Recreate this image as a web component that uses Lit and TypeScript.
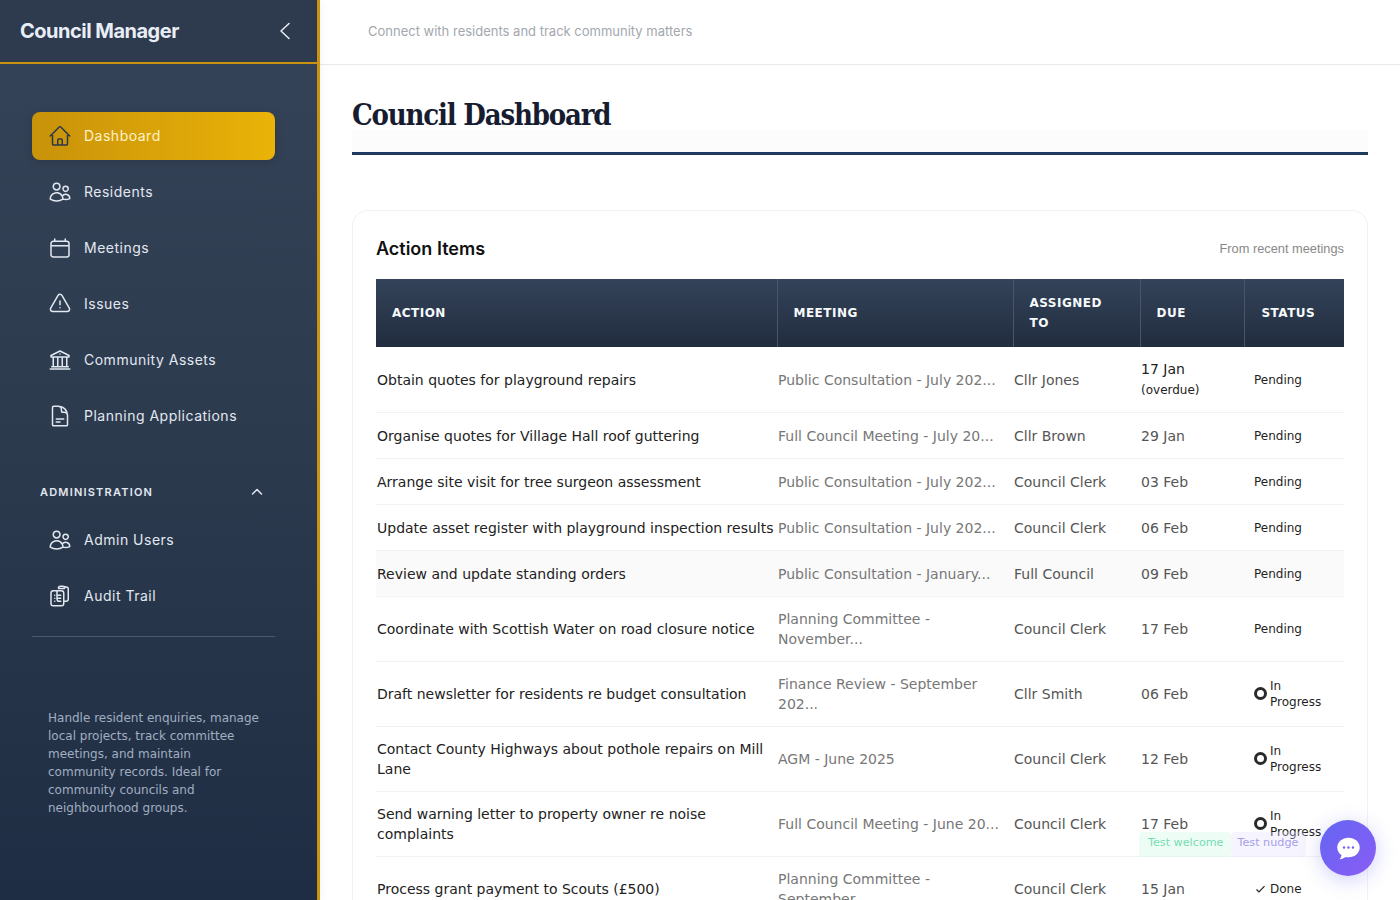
import { LitElement, html, css, svg } from "lit";
import { customElement } from "lit/decorators.js";

const icons: Record<string, any> = {
  home: svg`<path d="M2.25 12l8.95-8.95a1.13 1.13 0 0 1 1.6 0L21.750 12M4.500 9.750V19.900c0 .6.5 1.100 1.100 1.100H9.750v-4.900c0-.6.5-1.100 1.100-1.100h2.300c.6 0 1.100.5 1.100 1.100V21h4.150c.6 0 1.100-.5 1.100-1.100V9.750M8.250 21h8.250"/>`,
  users: svg`<path d="M15 19.130a9.380 9.380 0 0 0 2.630.37 9.340 9.340 0 0 0 4.120-.95 4.130 4.130 0 0 0-7.530-2.490M15 19.130v-.01c0-1.110-.29-2.160-.78-3.070M15 19.130v.1A12.320 12.320 0 0 1 8.620 21c-2.330 0-4.510-.64-6.370-1.770v-.11a6.380 6.380 0 0 1 11.960-3.070M12 6.380a3.380 3.380 0 1 1-6.750 0 3.380 3.380 0 0 1 6.750 0zM20.250 8.630a2.630 2.630 0 1 1-5.250 0 2.630 2.630 0 0 1 5.250 0z"/>`,
  calendar: svg`<path d="M6.750 3v2.250M17.250 3v2.250M3 18.750V7.500a2.250 2.250 0 0 1 2.250-2.250h13.500A2.250 2.250 0 0 1 21 7.500v11.250M3 18.750A2.250 2.250 0 0 0 5.250 21h13.500A2.250 2.250 0 0 0 21 18.750M3 9.750h18"/>`,
  warning: svg`<path d="M12 9v3.750M2.700 16.130c-.87 1.500.22 3.370 1.950 3.370h14.700c1.730 0 2.820-1.870 1.950-3.370L13.950 3.380c-.87-1.500-3.030-1.500-3.900 0L2.700 16.130zM12 15.750h.01v.01H12v-.01z"/>`,
  bank: svg`<path d="M12 3l9 4.500V9H3V7.500L12 3zM5.250 9v9.750M9.750 9v9.750M14.250 9v9.750M18.750 9v9.750M3.750 18.750h16.500M2.250 21h19.500M12 6h.01"/>`,
  doc: svg`<path d="M19.500 14.250v-2.630a3.380 3.380 0 0 0-3.380-3.370h-1.500A1.130 1.130 0 0 1 13.500 7.130v-1.500a3.380 3.380 0 0 0-3.380-3.380H8.250M8.250 15h7.500M8.250 18H12M10.500 2.250H5.630c-.62 0-1.130.5-1.130 1.130v17.250c0 .62.5 1.120 1.130 1.120h12.750c.62 0 1.120-.5 1.120-1.120V11.250a9 9 0 0 0-9-9z"/>`,
  clipboard: svg`<path d="M9 6.750V15a2.250 2.250 0 0 0 2.250 2.250M15.750 17.250h2.250a2.250 2.250 0 0 0 2.250-2.250V5.100c0-1.130-.84-2.090-1.960-2.180a48 48 0 0 0-1.120-.08M15 2.250H12a1.500 1.500 0 0 0-1.420 1.030M15 2.250a1.500 1.500 0 0 1 1.500 1.500v.75h-6v-.75c0-.16.03-.32.08-.47M6 6.750H5.250C4.010 6.750 3 7.760 3 9v10.500c0 1.240 1.010 2.250 2.250 2.250h8.250c1.240 0 2.250-1.010 2.250-2.250V9c0-1.240-1.010-2.250-2.250-2.250H6zM6.750 11.250h.01M6.750 14.250h.01M6.750 17.250h.01M9.750 11.250H12.750M9.750 14.250H12.750M9.750 17.250H12.750"/>`,
};

const icon = (name: string) => html`<svg class="ico" viewBox="0 0 24 24" fill="none" stroke="currentColor" stroke-width="1.5" stroke-linecap="round" stroke-linejoin="round">${icons[name]}</svg>`;

const nav = [
  { label: "Dashboard", icon: "home", active: true },
  { label: "Residents", icon: "users" },
  { label: "Meetings", icon: "calendar" },
  { label: "Issues", icon: "warning" },
  { label: "Community Assets", icon: "bank" },
  { label: "Planning Applications", icon: "doc" },
];
const adminNav = [
  { label: "Admin Users", icon: "users" },
  { label: "Audit Trail", icon: "clipboard" },
];

const rows = [
  { action: "Obtain quotes for playground repairs", meeting: "Public Consultation - July 202...", who: "Cllr Jones", due: "17 Jan", overdue: true, status: "Pending", tall: true },
  { action: "Organise quotes for Village Hall roof guttering", meeting: "Full Council Meeting - July 20...", who: "Cllr Brown", due: "29 Jan", status: "Pending" },
  { action: "Arrange site visit for tree surgeon assessment", meeting: "Public Consultation - July 202...", who: "Council Clerk", due: "03 Feb", status: "Pending" },
  { action: "Update asset register with playground inspection results", meeting: "Public Consultation - July 202...", who: "Council Clerk", due: "06 Feb", status: "Pending" },
  { action: "Review and update standing orders", meeting: "Public Consultation - January...", who: "Full Council", due: "09 Feb", status: "Pending", hover: true },
  { action: "Coordinate with Scottish Water on road closure notice", meeting: "Planning Committee - November...", who: "Council Clerk", due: "17 Feb", status: "Pending", tall: true },
  { action: "Draft newsletter for residents re budget consultation", meeting: "Finance Review - September 202...", who: "Cllr Smith", due: "06 Feb", status: "In Progress", tall: true },
  { action: "Contact County Highways about pothole repairs on Mill Lane", meeting: "AGM - June 2025", who: "Council Clerk", due: "12 Feb", status: "In Progress", tall: true },
  { action: "Send warning letter to property owner re noise complaints", meeting: "Full Council Meeting - June 20...", who: "Council Clerk", due: "17 Feb", status: "In Progress", tall: true },
  { action: "Process grant payment to Scouts (£500)", meeting: "Planning Committee - September...", who: "Council Clerk", due: "15 Jan", status: "Done", tall: true },
];

@customElement("app-root")
export class AppRoot extends LitElement {
  static styles = css`
    :host {
      display: flex;
      height: 900px;
      overflow: hidden;
      background: #fff;
      font-family: "DejaVu Sans", sans-serif;
    }
    .sidebar {
      position: relative;
      z-index: 1;
      width: 320px;
      flex: none;
      box-sizing: border-box;
      border-right: 3px solid #ca9410;
      background: linear-gradient(180deg, #364459 0%, #2c3a4e 50%, #1f2d44 100%);
      box-shadow: 0 0 10px rgba(0, 0, 0, 0.06);
      font-family: Inter, sans-serif;
      display: flex;
      flex-direction: column;
    }
    .brand {
      height: 64px;
      box-sizing: border-box;
      flex: none;
      display: flex;
      align-items: center;
      justify-content: space-between;
      padding: 0 26px 0 20px;
      background: #2e3a4e;
      border-bottom: 2px solid #ca9410;
      color: #e8eef6;
      font-size: 20px;
      font-weight: 700;
      letter-spacing: -0.5px;
    }
    .brand svg {
      width: 12px;
      height: 20px;
      display: block;
    }
    .menu {
      padding: 48px 42px 0 32px;
    }
    .item {
      height: 48px;
      margin-bottom: 8px;
      padding: 0 16px;
      display: flex;
      align-items: center;
      gap: 12px;
      border-radius: 8px;
      color: #e2e8f0;
      font-size: 14px;
      font-weight: 400;
      letter-spacing: 0.5px;
    }
    .item span {
      padding-bottom: 2px;
    }
    .item.active {
      background: linear-gradient(90deg, #c8920a 0%, #eab308 100%);
      color: #fef3c7;
      box-shadow: 0 2px 8px rgba(0, 0, 0, 0.15);
    }
    .item.active .ico {
      color: #2d3748;
    }
    .ico {
      width: 24px;
      height: 24px;
      flex: none;
      display: block;
    }
    .admin-head {
      margin-top: 32px;
      padding: 0 8px;
      height: 40px;
      display: flex;
      align-items: center;
      justify-content: space-between;
      color: #e2e8f0;
      font-size: 11px;
      font-weight: 600;
      letter-spacing: 1.2px;
    }
    .admin-head svg {
      width: 12px;
      height: 12px;
      margin-right: 4px;
    }
    .admin {
      margin-top: 4px;
    }
    .divider {
      height: 1px;
      background: #4a5a70;
      margin-top: 16px;
    }
    .about {
      margin: 72px 0 0;
      padding: 0 16px;
      color: #a0aec0;
      font-family: "DejaVu Sans", sans-serif;
      font-size: 12px;
      line-height: 18px;
    }
    .main {
      flex: 1;
      min-width: 0;
      overflow: hidden;
    }
    .topbar {
      height: 65px;
      box-sizing: border-box;
      border-bottom: 1px solid #e8eaed;
      display: flex;
      align-items: center;
      padding: 0 0 2px 48px;
      color: #a3a7ae;
      font-family: Inter, sans-serif;
      font-size: 13px;
    }
    .content {
      padding: 32px 32px 0;
    }
    .title {
      margin: 0;
      box-sizing: border-box;
      height: 58px;
      border-bottom: 3px solid #1e3a5f;
      background: linear-gradient(180deg, #fff 33px, #fcfcfc 33px);
      color: #171c30;
      font-family: "DejaVu Serif Condensed", "DejaVu Serif", serif;
      font-stretch: condensed;
      font-size: 29px;
      font-weight: 700;
      line-height: 36px;
      letter-spacing: -1.2px;
    }
    .card {
      margin-top: 55px;
      box-shadow: inset 0 0 0 1px #f1f2f4;
      border-radius: 16px;
      padding: 24px 24px 0;
    }
    .card-head {
      display: flex;
      justify-content: space-between;
      align-items: center;
      box-sizing: border-box;
      height: 29px;
      padding-bottom: 1px;
      margin-bottom: 16px;
    }
    .card-head h2 {
      margin: 0;
      color: #111;
      font-family: Inter, sans-serif;
      font-size: 18px;
      font-weight: 600;
    }
    .card-head span {
      color: #888;
      font-family: "Liberation Sans", sans-serif;
      font-size: 12.8px;
    }
    table {
      width: 968px;
      table-layout: fixed;
      border-collapse: collapse;
    }
    th {
      height: 68px;
      box-sizing: border-box;
      padding: 0 16px;
      background: linear-gradient(180deg, #34435a 0%, #212c3e 100%);
      border-left: 1px solid #4a5568;
      color: #f7fafc;
      font-size: 12px;
      font-weight: 700;
      letter-spacing: 0.48px;
      line-height: 20px;
      text-align: left;
    }
    th:first-child {
      border-left: 0;
    }
    th:last-child {
      padding-left: 17px;
    }
    td {
      padding: 9px 1px 8px;
      border-bottom: 1px solid #f1f2f4;
      color: #555;
      font-size: 14px;
      line-height: 20px;
    }
    td.action {
      color: #222;
    }
    td.meeting {
      color: #777;
    }
    tr.r {
      height: 46px;
    }
    tr.two {
      height: 65px;
    }
    tr.hover td {
      background: #fafafa;
    }
    .due-over {
      color: #222;
    }
    .due-over small {
      display: block;
      margin-top: 1px;
      font-size: 12px;
    }
    .status {
      display: flex;
      align-items: center;
      gap: 3px;
      padding-left: 9px;
      color: #1f1f1f;
      font-size: 12px;
      line-height: 16px;
    }
    .status .wrap {
      max-width: 60px;
    }
    .ring {
      width: 13px;
      height: 13px;
      margin-bottom: 1px;
      box-sizing: border-box;
      border: 3px solid #2a2a2a;
      border-radius: 50%;
      flex: none;
    }
    .check {
      width: 13px;
      height: 12px;
      flex: none;
    }
    .toasts {
      position: absolute;
      top: 832px;
      left: 1139px;
      display: flex;
      font-size: 11.2px;
    }
    .toast {
      height: 25px;
      box-sizing: border-box;
      padding-bottom: 4px;
      display: flex;
      align-items: center;
      border-radius: 4px;
    }
    .toast.welcome {
      padding-left: 9px;
      padding-right: 7px;
      background: rgba(209, 250, 229, 0.4);
      color: #76dcb4;
    }
    .toast.nudge {
      padding-left: 7px;
      padding-right: 8px;
      background: rgba(224, 220, 255, 0.3);
      color: #a5a0ea;
    }
    .fab {
      position: absolute;
      top: 820px;
      left: 1320px;
      width: 56px;
      height: 56px;
      border-radius: 50%;
      background: linear-gradient(135deg, #6366f1 0%, #8b5cf6 100%);
      box-shadow: 0 4px 20px rgba(99, 102, 241, 0.3);
      display: flex;
      align-items: center;
      justify-content: center;
    }
    .fab svg {
      width: 29px;
      height: 29px;
    }
  `;

  private renderItem(n: { label: string; icon: string; active?: boolean }) {
    return html`<div class="item ${n.active ? "active" : ""}">${icon(n.icon)}<span>${n.label}</span></div>`;
  }

  private renderStatus(s: string) {
    if (s === "In Progress") return html`<div class="status"><span class="ring"></span><span class="wrap">In Progress</span></div>`;
    if (s === "Done")
      return html`<div class="status"><svg class="check" viewBox="0 0 13 12" fill="none" stroke="#222" stroke-width="1.2"><path d="M2.500 6.500 5 9l5.500-5.800"/></svg><span>Done</span></div>`;
    return html`<div class="status"><span>${s}</span></div>`;
  }

  render() {
    return html`
      <aside class="sidebar">
        <div class="brand">
          <span>Council Manager</span>
          <svg viewBox="0 0 12 20" fill="none" stroke="currentColor" stroke-width="1.5" stroke-linecap="round" stroke-linejoin="round"><path d="M10 2.500 2 10l8 7.500"/></svg>
        </div>
        <nav class="menu">
          ${nav.map((n) => this.renderItem(n))}
          <div class="admin-head">
            <span>ADMINISTRATION</span>
            <svg viewBox="0 0 12 12" fill="none" stroke="currentColor" stroke-width="1.5" stroke-linecap="round" stroke-linejoin="round"><path d="M1.500 8 6 3.500 10.500 8"/></svg>
          </div>
          <div class="admin">${adminNav.map((n) => this.renderItem(n))}</div>
          <div class="divider"></div>
          <p class="about">Handle resident enquiries, manage local projects, track committee meetings, and maintain community records. Ideal for community councils and neighbourhood groups.</p>
        </nav>
      </aside>
      <main class="main">
        <div class="topbar">Connect with residents and track community matters</div>
        <div class="content">
          <h1 class="title">Council Dashboard</h1>
          <section class="card">
            <div class="card-head"><h2>Action Items</h2><span>From recent meetings</span></div>
            <table>
              <colgroup>
                <col style="width:401px" /><col style="width:236px" /><col style="width:127px" /><col style="width:104px" /><col style="width:100px" />
              </colgroup>
              <thead>
                <tr><th>ACTION</th><th>MEETING</th><th>ASSIGNED TO</th><th>DUE</th><th>STATUS</th></tr>
              </thead>
              <tbody>
                ${rows.map(
                  (r) => html`<tr class="${r.hover ? "hover" : ""} ${r.tall ? "two" : "r"}">
                    <td class="action">${r.action}</td>
                    <td class="meeting">${r.meeting}</td>
                    <td>${r.who}</td>
                    <td>${r.overdue ? html`<div class="due-over">${r.due}<small>(overdue)</small></div>` : r.due}</td>
                    <td>${this.renderStatus(r.status)}</td>
                  </tr>`
                )}
              </tbody>
            </table>
          </section>
        </div>
      </main>
      <div class="toasts"><div class="toast welcome">Test welcome</div><div class="toast nudge">Test nudge</div></div>
      <div class="fab">
        <svg viewBox="0 0 24 24"><path fill="#fff" d="M12 3c-5.200 0-9.300 3.600-9.300 8.100 0 2.700 1.400 5 3.600 6.500-.2 1.100-.8 2.200-1.700 3.200 2-.1 3.800-.8 5.100-1.800.7.1 1.500.2 2.300.2 5.200 0 9.300-3.600 9.300-8.100S17.200 3 12 3z"/><circle cx="8.300" cy="11.200" r="1" fill="#7761f3"/><circle cx="12" cy="11.200" r="1" fill="#7761f3"/><circle cx="15.700" cy="11.200" r="1" fill="#7761f3"/></svg>
      </div>
    `;
  }
}
